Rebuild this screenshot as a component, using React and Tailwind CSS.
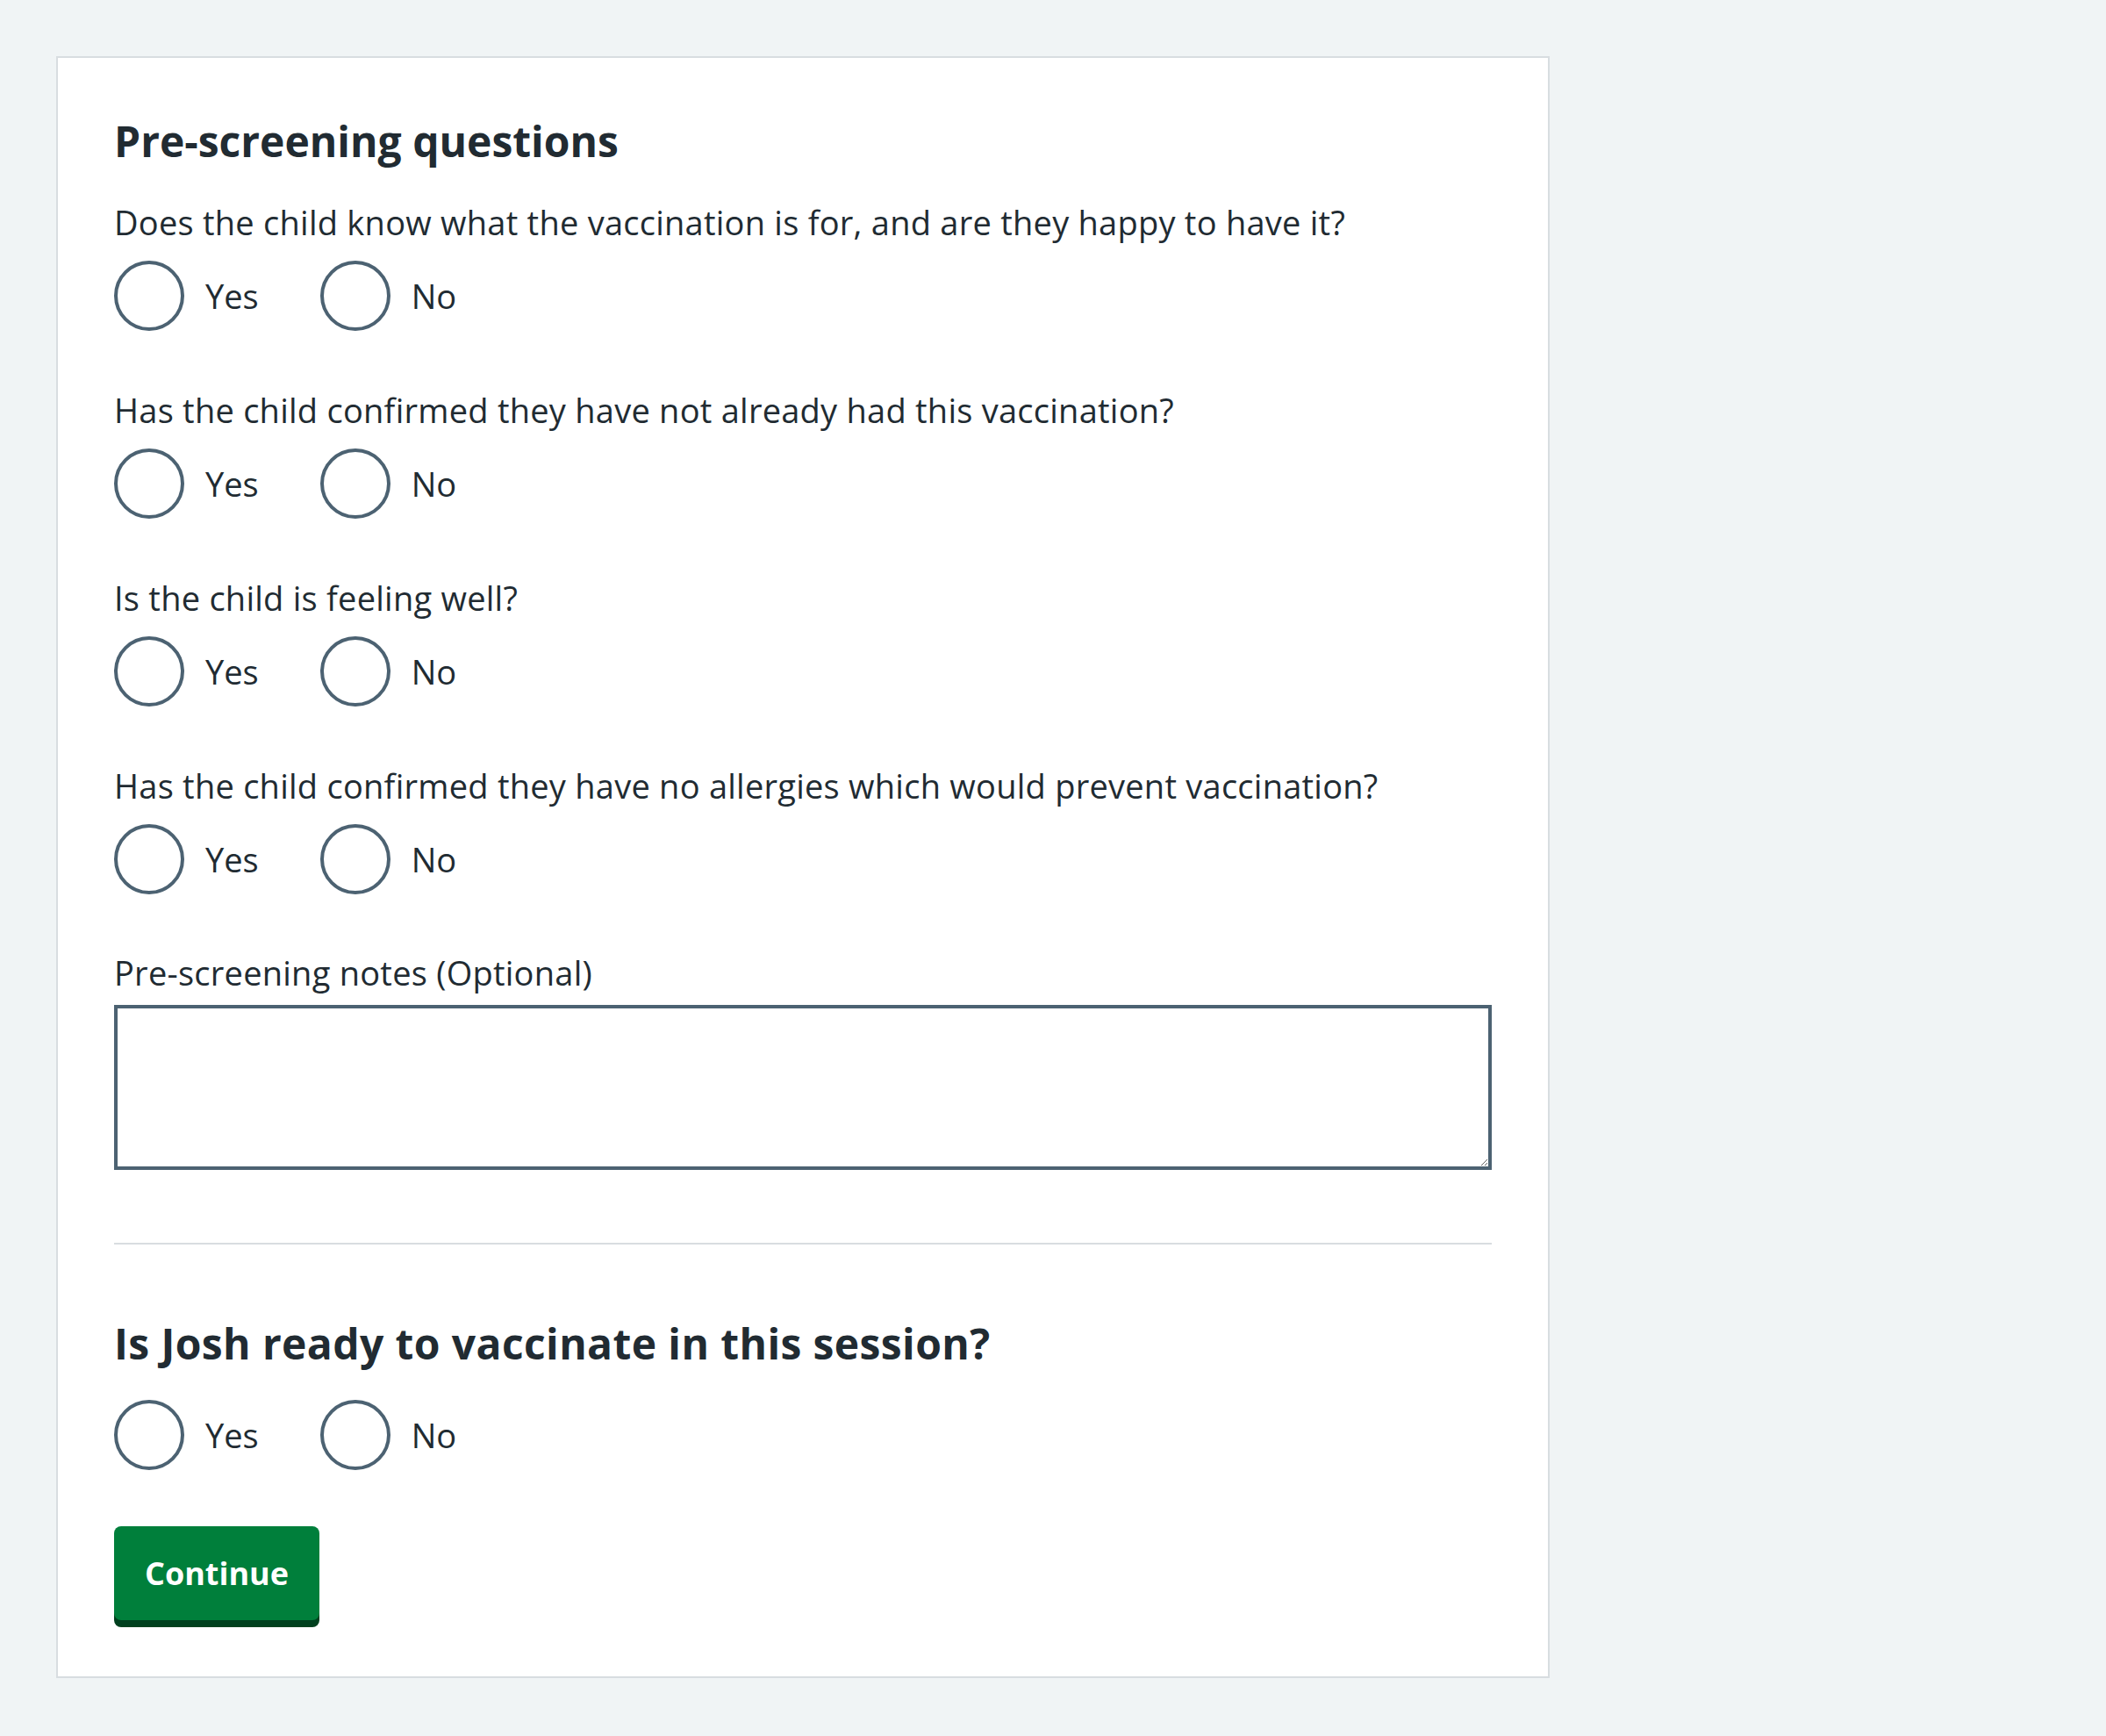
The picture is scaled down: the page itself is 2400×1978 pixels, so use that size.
import { useState } from "react";

const QUESTIONS = [
  "Does the child know what the vaccination is for, and are they happy to have it?",
  "Has the child confirmed they have not already had this vaccination?",
  "Is the child is feeling well?",
  "Has the child confirmed they have no allergies which would prevent vaccination?",
];

const RadioPair = ({ name, value, onChange }) => (
  <div className="flex items-center">
    {["Yes", "No"].map((opt) => (
      <label key={opt} className="flex items-center mr-[46px] cursor-pointer">
        <input
          type="radio"
          name={name}
          checked={value === opt}
          onChange={() => onChange(opt)}
          className="appearance-none w-[80px] h-[80px] rounded-full border-[4px] border-[#4c6272] bg-white m-0 checked:bg-[radial-gradient(circle,#212b32_38%,white_40%)]"
        />
        <span className="pl-[24px] pr-[24px] text-[38px] leading-[56px]">{opt}</span>
      </label>
    ))}
  </div>
);

export default function App() {
  const [answers, setAnswers] = useState({});
  const set = (k) => (v) => setAnswers((a) => ({ ...a, [k]: v }));

  return (
    <div
      className="min-h-[1978px] bg-[#f0f4f5] pt-[64px] pl-[64px] text-[#212b32]"
      style={{ fontFamily: '"Open Sans", Arial, sans-serif' }}
    >
      <div className="w-[1702px] bg-white border-2 border-[#d8dde0] pt-[63px] pb-[56px] px-[64px]">
        <h2 className="text-[48px] leading-[64px] font-bold mb-[32px]">
          Pre-screening questions
        </h2>

        {QUESTIONS.map((q, i) => (
          <fieldset key={i} className="mb-[62px]">
            <legend className="text-[38px] leading-[56px] tracking-[0.25px] mb-[16px]">{q}</legend>
            <RadioPair name={`q${i}`} value={answers[`q${i}`]} onChange={set(`q${i}`)} />
          </fieldset>
        ))}

        <div className="-mt-[1px]">
          <label htmlFor="notes" className="block text-[38px] leading-[56px] tracking-[0.25px] mb-[9px]">
            Pre-screening notes (Optional)
          </label>
          <textarea
            id="notes"
            className="block w-full h-[188px] border-[4px] border-[#4c6272] bg-white outline-none p-[8px] text-[38px]"
          />
        </div>

        <hr className="mt-[83px] mb-[81px] border-0 border-t-2 border-[#d8dde0]" />

        <fieldset>
          <legend className="text-[48px] leading-[64px] tracking-[0.4px] font-bold mb-[32px]">
            Is Josh ready to vaccinate in this session?
          </legend>
          <RadioPair name="ready" value={answers.ready} onChange={set("ready")} />
        </fieldset>

        <button className="mt-[64px] h-[107px] w-[234px] rounded-[8px] bg-[#007f3b] text-white text-[36px] font-bold shadow-[0_8px_0_#00401e] mb-[8px]">
          Continue
        </button>
      </div>
    </div>
  );
}
